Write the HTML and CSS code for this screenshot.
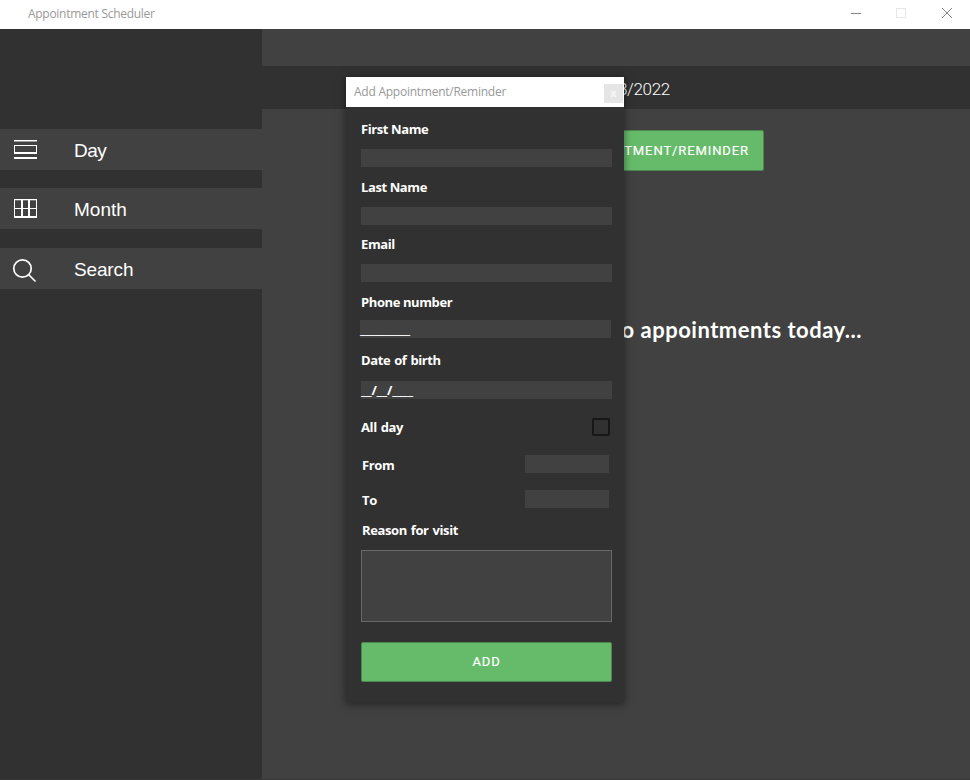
FILE: index.html
```html
<!DOCTYPE html>
<html lang="en">
<head>
<meta charset="utf-8">
<title>Appointment Scheduler</title>
<link rel="stylesheet" href="styles.css">
</head>
<body>
<div class="window">
  <header class="titlebar">
    <span class="app-title">Appointment Scheduler</span>
    <svg class="window-controls" width="120" height="28" viewBox="850 0 120 28" fill="none" shape-rendering="crispEdges">
      <path d="M851 13.500h10" stroke="#888"/>
      <path d="M896.500 8.500h9v9h-9z" stroke="#e6e6e6"/>
      <path d="M942 8l10 10M952 8l-10 10" stroke="#888" shape-rendering="auto"/>
    </svg>
  </header>
  <div class="workspace">
    <nav class="sidebar">
      <a class="nav-item">
        <svg width="26" height="24" viewBox="0 0 26 24" fill="none" stroke="#fff" shape-rendering="crispEdges"><path d="M1 2.500h23"/><path d="M1 3.500h23" stroke="#999"/><path d="M1.500 16V7.500h22V16"/><path d="M1 15h23M1 20h23" stroke-width="2"/></svg>
        <span class="nav-day">Day</span>
      </a>
      <a class="nav-item">
        <svg width="26" height="24" viewBox="0 0 26 24" fill="none" stroke="#fff" shape-rendering="crispEdges"><path d="M1.500 21V2.500h22V21M1 11.500h23"/><path d="M2 3.500h21" stroke="#777"/><path d="M9 3v17M16 3v17M1 20h23" stroke-width="2"/></svg>
        <span class="nav-month">Month</span>
      </a>
      <a class="nav-item">
        <svg width="26" height="24" viewBox="0 0 26 24" fill="none" stroke="#fff" stroke-width="1.700"><circle cx="9.500" cy="9.500" r="8.700"/><path d="M15.500 15.500l7 7"/></svg>
        <span class="nav-search">Search</span>
      </a>
    </nav>
    <main class="content">
      <div class="date-bar"><span class="date">2/18/2022</span></div>
      <button class="green-button open-form">ADD APPOINTMENT/REMINDER</button>
      <p class="empty-message">No appointments today...</p>
    </main>
  </div>
</div>
<section class="dialog">
  <header class="dialog-title"><span>Add Appointment/Reminder</span><button class="dialog-close">x</button></header>
  <form class="form">
    <label class="l-first">First Name</label>
    <div class="field"></div>
    <label class="l-last">Last Name</label>
    <div class="field"></div>
    <label class="l-email">Email</label>
    <div class="field"></div>
    <label class="l-phone">Phone number</label>
    <div class="field phone"><span>__________</span></div>
    <label class="l-birth">Date of birth</label>
    <div class="field birth"><span>__/__/____</span></div>
    <div class="row all-day"><label>All day</label><div class="checkbox"></div></div>
    <div class="row from"><label>From</label><div class="field time"></div></div>
    <div class="row to"><label>To</label><div class="field time"></div></div>
    <label class="l-reason">Reason for visit</label>
    <div class="reason"></div>
    <button type="button" class="green-button add">ADD</button>
  </form>
</section>
</body>
</html>
```
FILE: styles.css
```css
* { box-sizing: border-box; }
body { margin: 0; background: #414141; color: #fff; overflow: hidden; }
button { font: inherit; color: inherit; border: 0; padding: 0; }
svg { overflow: visible; }

.window { height: 780px; display: flex; flex-direction: column; border-bottom: 1px solid #383638; }
.titlebar {
  height: 29px; flex: none; background: #fff; color: #999;
  display: flex; justify-content: space-between; padding-left: 28px;
  font: 12px/28px "Open Sans", sans-serif; letter-spacing: -.28px;
}
.window-controls { display: block; }
.workspace { flex: 1; display: flex; }

.sidebar {
  width: 262px; background: #313131; padding-top: 100px;
  display: flex; flex-direction: column;
  font: 19px/43px "Liberation Sans", sans-serif;
}
.nav-item { height: 41px; margin-bottom: 18px; padding-left: 13px; background: #414141; display: flex; gap: 35px; }
.nav-item:nth-child(2) { margin-bottom: 19px; }
.nav-item svg { margin-top: 9px; }
.nav-item:nth-child(3) svg { margin-top: 11px; }
.nav-day { letter-spacing: -.5px; }
.nav-search { letter-spacing: -.15px; }

.content { flex: 1; padding-top: 37px; display: flex; flex-direction: column; }
.date-bar { height: 43px; background: #313131; padding-right: 300px; text-align: right; font: 300 17px/46px Roboto, sans-serif; letter-spacing: -.3px; }
.green-button {
  background: #66bb6a; border: 1px solid #4c8850; border-radius: 2px;
  font: 400 13px/38px Roboto, sans-serif; letter-spacing: .9px; color: #fff;
  -webkit-text-stroke: .2px #fff;
}
.open-form { width: 240px; height: 41px; margin: 21px 206px 0 auto; padding-right: 14px; text-align: right; white-space: nowrap; }
.empty-message { margin: 143px 108px 0 0; text-align: right; font: bold 22px/32px Lato, sans-serif; letter-spacing: .5px; }

.dialog {
  position: absolute; left: 346px; top: 77px; width: 278px; height: 626px;
  background: #313131; box-shadow: 0 1px 8px rgba(0, 0, 0, .5);
}
.dialog-title {
  height: 30px; background: #fff; color: #999; padding-left: 8px;
  display: flex; justify-content: space-between; font: 12px/30px "Open Sans", sans-serif; letter-spacing: -.25px;
}
.dialog-close { width: 19px; height: 19px; margin: 7px 1px 0 0; background: #e5e5e5; color: #f7f7f7; font: bold 10px/17px "Open Sans", sans-serif; }

.form { padding: 13px 12px 0 15px; display: flex; flex-direction: column; }
.form label { height: 18px; margin-bottom: 11px; font: 700 13px/18px "Open Sans", sans-serif; letter-spacing: -.4px; word-spacing: 1px; white-space: nowrap; }
.field { height: 18px; margin-bottom: 11px; background: #414141; font: bold 13px/18px "Open Sans", sans-serif; }
.field:nth-of-type(2) { margin-bottom: 10px; }
.form .l-first, .form .l-last, .form .l-phone { word-spacing: 0; }
.form .l-phone { margin-bottom: 9px; }
.phone { width: 251px; margin-left: -1px; margin-bottom: 13px; letter-spacing: -.38px; }
.form .l-birth { margin-bottom: 12px; }
.birth { margin-bottom: 19px; letter-spacing: -.15px; }
.row { height: 18px; display: flex; justify-content: space-between; }
.checkbox { width: 18px; height: 18px; margin-right: 2px; border: 2px solid #171717; border-radius: 2px; }
.all-day { margin-bottom: 19px; }
.from { margin-bottom: 17px; }
.to { margin-bottom: 13px; }
.from label, .to label { padding: 1px 0 0 1px; }
.time { width: 84px; margin-right: 3px; }
.form .l-reason { padding-left: 1px; }
.reason { height: 72px; background: #414141; border: 1px solid #686868; }
.add { height: 40px; margin-top: 20px; }
```
